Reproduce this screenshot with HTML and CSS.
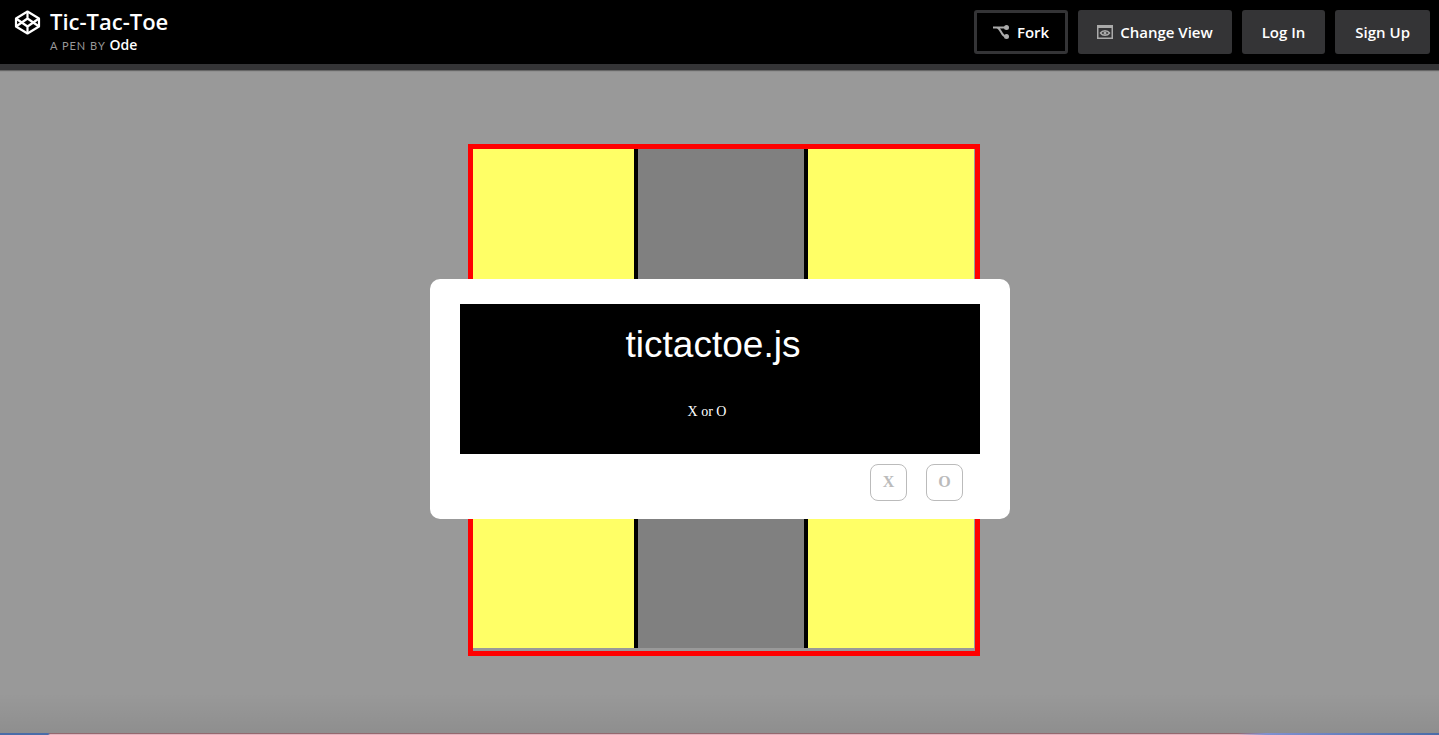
FILE: index.html
```html
<!DOCTYPE html>
<html lang="en">
<head>
<meta charset="utf-8">
<title>Tic-Tac-Toe</title>
<link rel="stylesheet" href="styles.css">
</head>
<body>
<header class="topbar">
  <a class="logo" href="#" aria-label="CodePen">
    <svg width="27" height="26" viewBox="0 0 27 26" fill="none" stroke="#fff" stroke-width="2.2" stroke-linejoin="round">
      <path d="M13.5 1.5 25 8.500v8L13.5 23.500 2 16.500V8.500z"/>
      <path d="M2 8.500l11.5 8 11.500-8M2 16.500l11.5-8 11.500 8M13.5 1.500v7M13.5 16.500v7"/>
    </svg>
  </a>
  <div class="pen">
    <h1 class="pen-title">Tic-Tac-Toe</h1>
    <p class="pen-author"><span class="byline">A PEN BY</span> <a class="author" href="#">Ode</a></p>
  </div>
  <nav class="actions">
    <button class="btn btn-icon btn-fork" type="button">
      <svg width="17" height="14" viewBox="0 0 17 14" fill="none" stroke="#aaa" stroke-width="2">
        <path d="M0 2.500h14M3.500 2.500c4.500 0 4.500 9 9.500 9"/>
        <circle cx="13.500" cy="2.500" r="2.500" fill="#aaa" stroke="none"/>
        <circle cx="13.500" cy="11.500" r="2.500" fill="#aaa" stroke="none"/>
      </svg>
      Fork
    </button>
    <button class="btn btn-icon" type="button">
      <svg width="16" height="14" viewBox="0 0 16 14" fill="none" stroke="#aaa">
        <path d="M.75 1h14.500v12.250H.75z" stroke-width="1.500"/>
        <path d="M0 1.500h16" stroke-width="3"/>
        <path d="M3.500 8c2-3 7-3 9 0-2 3-7 3-9 0z" stroke-width="1.500"/>
        <circle cx="8" cy="8" r="1.500" fill="#aaa" stroke="none"/>
      </svg>
      Change View
    </button>
    <button class="btn" type="button">Log In</button>
    <button class="btn" type="button">Sign Up</button>
  </nav>
</header>
<main class="stage">
  <div class="board">
    <div class="cell light"></div><div class="cell"></div><div class="cell light last"></div>
    <div class="cell"></div><div class="cell light"></div><div class="cell last"></div>
    <div class="cell light"></div><div class="cell"></div><div class="cell light last"></div>
  </div>
  <div class="overlay">
    <section class="dialog" role="dialog" aria-labelledby="dialog-title">
      <div class="banner">
        <h2 class="dialog-title" id="dialog-title">tictactoe.js</h2>
        <p class="question">X or O</p>
      </div>
      <div class="choices">
        <button class="choice" type="button">X</button>
        <button class="choice" type="button">O</button>
      </div>
    </section>
  </div>
</main>
<div class="desktop-edge"></div>
</body>
</html>
```
FILE: styles.css
```css
* {
  box-sizing: border-box;
}

body {
  display: flex;
  flex-direction: column;
  min-height: 100vh;
  margin: 0;
  background: #999;
  font-family: "Liberation Serif", "Times New Roman", serif;
}

.topbar {
  display: flex;
  align-items: flex-start;
  padding: 10px 9px 8px 14px;
  background: #000;
  border-bottom: 6px solid #343436;
  box-shadow: 0 1px 1px #666;
  font-family: "Open Sans", sans-serif;
  color: #fff;
}

.logo {
  display: flex;
  margin-right: 9px;
}

.pen {
  flex: 1;
  height: 46px;
}

.pen-title {
  margin: 0;
  font-size: 22px;
  font-weight: 600;
  line-height: 22px;
}

.pen-author {
  margin: 3px 0 0;
  font-size: 14px;
  line-height: 20px;
}

.byline {
  color: #999;
  font-family: Lato, sans-serif;
  font-size: 11px;
  letter-spacing: 1px;
}

.author {
  color: #fff;
  font-weight: 600;
  text-decoration: none;
}

.actions {
  display: flex;
  gap: 10px;
}

.btn {
  display: flex;
  align-items: center;
  gap: 7px;
  height: 44px;
  padding: 0 20px;
  border: 0;
  border-radius: 3px;
  background: #343436;
  color: #fff;
  font: 600 15px "Open Sans", sans-serif;
}

.btn-icon {
  padding: 0 19px;
}

.btn-fork {
  padding: 0 16px;
  border: 3px solid #343436;
  background: #000;
}

.stage {
  position: relative;
  flex: 1;
  display: flex;
  justify-content: center;
  align-items: flex-start;
  padding: 74px 0 77px 9px;
  background: linear-gradient(to top, rgba(0, 0, 0, 0.07), transparent 40px);
}

.board {
  display: grid;
  grid-template-columns: 165px 170px 166px;
  grid-template-rows: 165px 168px 166px;
  padding: 0 1px 3px 0;
  border: 5px solid #f00;
}

.cell {
  border-right: 4px solid #000;
  background: #808080;
}

.light {
  background: #ff6;
}

.last {
  border-right: 0;
}

.overlay {
  position: absolute;
  inset: 0;
  display: flex;
  justify-content: center;
  align-items: flex-start;
  padding: 209px 0 0 1px;
}

.dialog {
  width: 580px;
  padding: 25px 30px 18px;
  border-radius: 10px;
  background: #fff;
}

.banner {
  padding: 21px 14px 32px 0;
  background: #000;
  color: #fff;
  text-align: center;
}

.dialog-title {
  margin: 0;
  font: 400 37px/40px "Liberation Sans", Arial, sans-serif;
}

.question {
  margin: 37px 12px 0 0;
  font-size: 14px;
  line-height: 20px;
}

.choices {
  display: flex;
  justify-content: flex-end;
  gap: 19px;
  padding: 10px 17px 0 0;
}

.choice {
  width: 37px;
  height: 37px;
  padding: 0 0 2px;
  border: 1px solid #bbb;
  border-radius: 8px;
  background: #fff;
  color: #bbb;
  font: 700 16px "Liberation Serif", "Times New Roman", serif;
}

.desktop-edge {
  height: 2px;
  background:
    linear-gradient(to right, #4a6ca8 48px, transparent 50px, transparent 86%, #8090d0 88%, #4a6ca8),
    linear-gradient(#94686e 1px, #e0b2bd 1px);
}
```
